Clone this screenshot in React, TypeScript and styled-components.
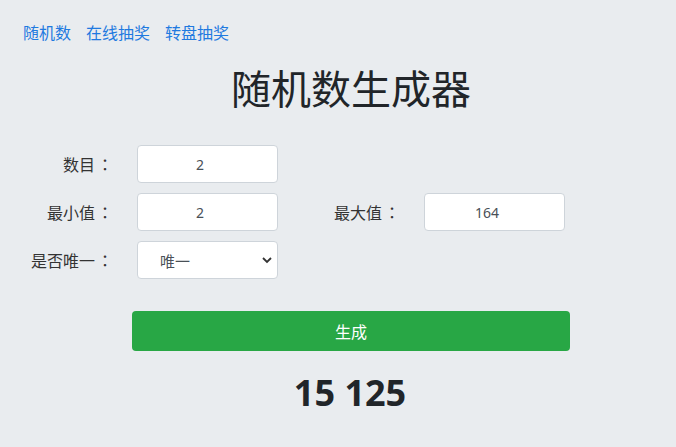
import React from "react";
import styled, { createGlobalStyle } from "styled-components";

const Global = createGlobalStyle`
  html, body { margin: 0; padding: 0; background: #e9ecef; }
  body {
    font-family: "Noto Sans", "Open Sans", "Noto Sans CJK SC", sans-serif;
    color: #212529;
  }
`;

const Page = styled.div`
  width: 676px;
  min-height: 447px;
  box-sizing: border-box;
  padding: 20px 0 0 0;
`;

const Nav = styled.nav`
  display: flex;
  gap: 15px;
  padding-left: 23px;
  height: 24px;
  align-items: center;
`;

const NavLink = styled.a`
  font-family: "Noto Sans CJK SC", sans-serif;
  font-size: 16px;
  color: #1f7ae0;
  text-decoration: none;
`;

const Title = styled.h1`
  margin: 15px 0 0 0;
  text-align: center;
  font-family: "Noto Sans CJK SC", sans-serif;
  font-weight: 400;
  font-size: 40px;
  line-height: 56px;
  color: #212529;
  transform: translateX(13px);
`;

const Form = styled.div`
  display: grid;
  grid-template-columns: 122px 141px 146px 141px;
  row-gap: 10px;
  margin-top: 30px;
  padding-left: 15px;
`;

const Label = styled.label`
  font-family: "Noto Sans CJK SC", sans-serif;
  font-size: 16px;
  color: #333;
  padding-right: 24px;
  display: flex;
  align-items: center;
  justify-content: flex-end;
  height: 38px;
`;

const Colon = styled.span`
  font-family: "Noto Sans CJK TC", sans-serif;
  margin-left: 2px;
`;

const Input = styled.input`
  box-sizing: border-box;
  width: 141px;
  height: 38px;
  border: 1px solid #ced4da;
  border-radius: 4px;
  background: #fff;
  text-align: center;
  padding: 0;
  font-family: "Noto Sans", "Open Sans", sans-serif;
  font-size: 14px;
  color: #495057;
  outline: none;
`;

const SelectWrap = styled.div`
  position: relative;
  width: 141px;
  height: 38px;
`;

const Select = styled.select`
  box-sizing: border-box;
  width: 141px;
  height: 38px;
  border: 1px solid #ced4da;
  border-radius: 4px;
  background: #fff;
  appearance: none;
  padding-left: 22px;
  font-family: "Noto Sans CJK SC", sans-serif;
  font-size: 15px;
  color: #495057;
  outline: none;
`;

const Chevron = styled.svg`
  position: absolute;
  right: 6px;
  top: 15px;
  pointer-events: none;
`;

const Spacer = styled.div``;

const ButtonRow = styled.div`
  display: flex;
  justify-content: center;
  margin-top: 32px;
  padding-left: 26px;
`;

const Button = styled.button`
  width: 438px;
  height: 40px;
  border: none;
  border-radius: 4px;
  background: #28a745;
  color: #fff;
  font-family: "Noto Sans CJK SC", sans-serif;
  font-size: 16px;
  cursor: pointer;
`;

const Result = styled.div`
  text-align: center;
  margin-top: 19px;
  font-family: "Open Sans", "Noto Sans", sans-serif;
  font-weight: 700;
  font-size: 36px;
  line-height: 46px;
  color: #212529;
  padding-left: 24px;
`;

const L = ({ text }: { text: string }) => (
  <Label>
    {text}
    <Colon>：</Colon>
  </Label>
);

export default function App() {
  return (
    <Page>
      <Global />
      <Nav>
        <NavLink href="#">随机数</NavLink>
        <NavLink href="#">在线抽奖</NavLink>
        <NavLink href="#">转盘抽奖</NavLink>
      </Nav>
      <Title>随机数生成器</Title>
      <Form>
        <L text="数目" />
        <Input type="number" defaultValue="2" />
        <Spacer />
        <Spacer />
        <L text="最小值" />
        <Input type="number" defaultValue="2" />
        <L text="最大值" />
        <Input type="number" defaultValue="164" />
        <L text="是否唯一" />
        <SelectWrap>
          <Select defaultValue="1">
            <option value="1">唯一</option>
            <option value="0">不唯一</option>
          </Select>
          <Chevron width="10" height="8" viewBox="0 0 10 8">
            <path d="M1 2 L5 6 L9 2" stroke="#333" strokeWidth="1.8" fill="none" />
          </Chevron>
        </SelectWrap>
      </Form>
      <ButtonRow>
        <Button>生成</Button>
      </ButtonRow>
      <Result>15 125</Result>
    </Page>
  );
}
